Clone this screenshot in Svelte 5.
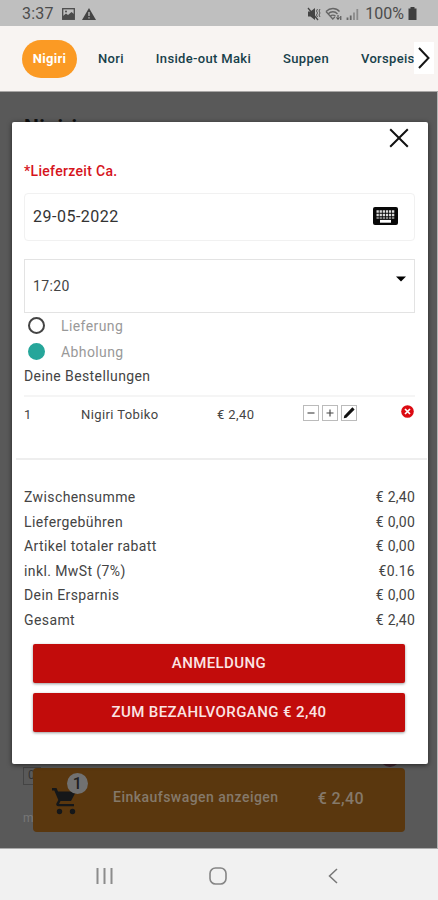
<script lang="ts">
	const categories = ['Nigiri', 'Nori', 'Inside-out Maki', 'Suppen', 'Vorspeisen'];

	const totals = [
		{ label: 'Zwischensumme', value: '€ 2,40' },
		{ label: 'Liefergebühren', value: '€ 0,00' },
		{ label: 'Artikel totaler rabatt', value: '€ 0,00' },
		{ label: 'inkl. MwSt (7%)', value: '€0.16' },
		{ label: 'Dein Ersparnis', value: '€ 0,00' },
		{ label: 'Gesamt', value: '€ 2,40' }
	];

	let active = $state('Nigiri');
	let mode = $state('Abholung');
</script>

<div class="phone">
	<header class="status">
		<span class="clock">3:37</span>
		<svg class="photo" width="13" height="12" viewBox="0 0 13 12">
			<rect x="0.7" y="0.7" width="11.6" height="10.6" fill="none" stroke="#4b4b4b" stroke-width="1.3" />
			<path d="M1 10V8l3-2.5L6 7l3.5-3L12 6v5H1z" fill="#4b4b4b" />
			<circle cx="4" cy="3.6" r="1" fill="#4b4b4b" />
		</svg>
		<svg width="14" height="12" viewBox="0 0 14 12">
			<path d="M7 0l7 12H0z" fill="#444" />
			<path d="M7 4v4M7 9.2v1.4" stroke="#bfbfbf" stroke-width="1.3" />
		</svg>
		<span class="spacer"></span>
		<svg class="mute" width="14" height="14" viewBox="0 0 14 14">
			<path d="M1 4.5h2.5L8 1v12L3.5 9.5H1z" fill="#444" />
			<path d="M1 1l10 12" stroke="#444" stroke-width="1.3" />
			<path d="M10.5 2l-1 2 1 2-1 2 1 2M13 2l-1 2 1 2-1 2 1 2" fill="none" stroke="#555" />
		</svg>
		<svg class="wifi" width="17" height="14" viewBox="0 0 17 14">
			<g fill="none" stroke="#666" stroke-width="1.3">
				<path d="M1 4.5c4-4 10-4 13.5 0M3 7c3-3 7-3 9.5 0M5.2 9.3c1.5-1.5 4-1.5 5.3 0" />
				<path d="M1 4.5L7.8 12l2-2" />
			</g>
			<path d="M13 8v4M11.5 10.5L13 12.5l1.5-2M15.8 13V9" stroke="#444" fill="none" />
		</svg>
		<svg class="signal" width="13" height="12" viewBox="0 0 13 12">
			<path d="M1.5 12v-2.5M4.7 12V7.5" stroke="#666" stroke-width="1.8" />
			<path d="M8 12V4.5M11.3 12V1" stroke="#8b8b8b" stroke-width="1.8" />
		</svg>
		<span class="percent">100%</span>
		<svg width="9" height="13" viewBox="0 0 9 13">
			<path d="M2.5 0h4v1.5h2v11.5h-8V1.5h2z" fill="#3e3e3e" />
		</svg>
	</header>

	<nav class="categories">
		{#each categories as category (category)}
			<button class="category" class:active={category === active} onclick={() => (active = category)}>
				{category}
			</button>
		{/each}
		<span class="next">
			<svg width="12" height="22" viewBox="0 0 12 22">
				<path d="M1 1l9.5 10L1 21" fill="none" stroke="#151515" stroke-width="2" />
			</svg>
		</span>
	</nav>

	<main class="page">
		<h2>Nigiri</h2>
		<div class="behind">
			<div class="stub">0</div>
			<div class="stub-text">m</div>
		</div>
		<div class="round"></div>

		<div class="cart">
			<span class="cart-icon">
				<svg width="26" height="28" viewBox="0 0 26 28">
					<path d="M1 1h4.5l1.5 3.5h18l-5 9.500H9.500L8 17h15v2.300H7.500c-2 0-2.800-1.500-2-3L7.300 13 3.300 3.400H1z" fill="#151719" />
					<circle cx="8.500" cy="24.500" r="2.700" fill="#151719" />
					<circle cx="21.500" cy="24.500" r="2.700" fill="#151719" />
				</svg>
				<span class="badge">1</span>
			</span>
			<span class="cart-label">Einkaufswagen anzeigen</span>
			<span class="cart-price">€ 2,40</span>
		</div>

		<section class="modal">
			<div class="close">
				<svg width="20" height="20" viewBox="0 0 20 20">
					<path d="M1.2 1.2l17.6 17.6M18.8 1.2L1.2 18.8" stroke="#111" stroke-width="2" />
				</svg>
			</div>
			<div class="required">*Lieferzeit Ca.</div>
			<div class="date">
				<span>29-05-2022</span>
				<svg width="25" height="18" viewBox="0 0 25 18">
					<rect width="25" height="18" rx="2" fill="#080808" />
					<path d="M3.5 4.5h18M3.5 8h18" stroke="#ddd" stroke-width="2.6" stroke-dasharray="2.3 0.8" />
					<path d="M3.5 11h18" stroke="#aaa" stroke-width="1.6" stroke-dasharray="2.3 0.8" />
					<path d="M7 14.3h11" stroke="#fff" stroke-width="2.8" />
				</svg>
			</div>
			<div class="time">
				<span>17:20</span>
				<svg width="10" height="6" viewBox="0 0 10 6">
					<path d="M0 0.5h10L5 5.5z" fill="#000" />
				</svg>
			</div>

			<div class="modes">
				{#each ['Lieferung', 'Abholung'] as option (option)}
					<button class="mode" onclick={() => (mode = option)}>
						<span class="radio" class:checked={mode === option}></span>
						{option}
					</button>
				{/each}
			</div>
			<div class="orders-title">Deine Bestellungen</div>

			<div class="order">
				<span class="qty">1</span>
				<span class="name">Nigiri Tobiko</span>
				<span class="price">€ 2,40</span>
				<span class="tools">
					<svg viewBox="0 0 16 16"><path d="M4 8h8" stroke="#444" stroke-width="1.3" /></svg>
					<svg viewBox="0 0 16 16"><path d="M4 8h8M8 4v8" stroke="#444" stroke-width="1.3" /></svg>
					<svg viewBox="0 0 16 16">
						<path d="M2 14l0.6-3L11 2.300l1-0.800 2.400 2.400-0.800 1L5 13.400z" fill="#111" />
					</svg>
				</span>
				<svg class="remove" width="13" height="13" viewBox="0 0 13 13">
					<circle cx="6.5" cy="6.5" r="6.3" fill="#dc0a12" />
					<path d="M4 4l5 5M9 4L4 9" stroke="#fff" stroke-width="1.7" />
				</svg>
			</div>

			<div class="totals">
				{#each totals as row (row.label)}
					<div class="total">
						<span>{row.label}</span>
						<span class="amount">{row.value}</span>
					</div>
				{/each}
			</div>

			<div class="actions">
				<button>ANMELDUNG</button>
				<button>ZUM BEZAHLVORGANG € 2,40</button>
			</div>
		</section>
	</main>

	<footer class="system">
		<svg width="17" height="16" viewBox="0 0 17 16">
			<path d="M1.5 0v16M8.5 0v16M15.5 0v16" stroke="#8c8c8c" stroke-width="2" />
		</svg>
		<svg class="home" width="18" height="18" viewBox="0 0 18 18">
			<rect x="1" y="1" width="16" height="16" rx="5.5" fill="none" stroke="#858585" stroke-width="1.6" />
		</svg>
		<svg width="10" height="16" viewBox="0 0 10 16">
			<path d="M9 1L1.5 8 9 15" fill="none" stroke="#777" stroke-width="1.5" />
		</svg>
	</footer>
</div>

<style>
	:global(body) {
		margin: 0;
	}
	.phone {
		width: 438px;
		height: 900px;
		display: flex;
		flex-direction: column;
		overflow: hidden;
		font-family: Roboto, 'Liberation Sans', sans-serif;
		font-size: 14px;
		letter-spacing: 0.4px;
		color: #444;
		background: #f1f1f1;
	}
	.phone *,
	.phone {
		box-sizing: border-box;
	}
	button {
		border: 0;
		padding: 0;
		background: none;
		font: inherit;
		letter-spacing: inherit;
		color: inherit;
	}
	svg {
		display: block;
		flex: none;
	}

	.status {
		height: 26px;
		flex: none;
		display: flex;
		align-items: center;
		padding: 1px 21px 0 22px;
		background: #bfbfbf;
		color: #4c4c4c;
		font-size: 16px;
		letter-spacing: 0;
	}
	.clock {
		width: 40px;
		letter-spacing: 0.2px;
	}
	.photo {
		margin-right: 7px;
	}
	.spacer {
		flex: 1;
	}
	.mute {
		margin-right: 4px;
	}
	.wifi {
		margin-right: 4px;
	}
	.signal {
		margin-right: 6px;
	}
	.percent {
		margin-right: 4px;
	}

	.categories {
		height: 66px;
		flex: none;
		display: flex;
		align-items: center;
		position: relative;
		overflow: hidden;
		padding-left: 22px;
		background: #f8f4f2;
		border-bottom: 1px solid #a8a6a5;
	}
	.category {
		flex: none;
		height: 38px;
		margin-right: 32px;
		font-size: 13px;
		font-weight: 500;
		letter-spacing: 0.33px;
		color: #17404a;
	}
	.category.active {
		width: 55px;
		margin-right: 21px;
		border-radius: 19px;
		background: #fb9a24;
		color: #fff;
		font-weight: 700;
	}
	.next {
		position: absolute;
		right: 4px;
		top: 16px;
		width: 20px;
		height: 32px;
		display: flex;
		align-items: center;
		justify-content: center;
		background: #fff;
	}

	.page {
		position: relative;
		flex: 1;
		display: flex;
		flex-direction: column;
		justify-content: space-between;
		padding: 25px 32px 16px 24px;
		background: #595959;
		border-right: 1px solid #b5b5b5;
	}
	h2 {
		margin: 0;
		font-size: 21px;
		line-height: 21px;
		color: #111;
	}
	.behind {
		position: absolute;
		left: 23px;
		top: 675px;
		font-size: 12px;
		color: #333;
	}
	.stub {
		width: 18px;
		height: 18px;
		padding-left: 4px;
		line-height: 15px;
		border: 1px solid #444;
	}
	.stub-text {
		margin-top: 25px;
		line-height: 16px;
		color: #777;
	}
	.round {
		position: absolute;
		left: 380px;
		top: 655px;
		width: 20px;
		height: 20px;
		border-radius: 50%;
		background: #3f2730;
	}
	.cart {
		position: relative;
		height: 64px;
		margin-left: 9px;
		display: flex;
		align-items: center;
		padding: 0 41px 6px 18px;
		border-radius: 4px;
		background: #5a370e;
		color: #85796a;
		font-weight: 500;
	}
	.cart-icon {
		position: relative;
		margin-top: 8px;
	}
	.badge {
		position: absolute;
		left: 16px;
		top: -14px;
		width: 21px;
		height: 21px;
		border-radius: 50%;
		background: #717171;
		color: #202020;
		font-size: 16px;
		line-height: 21px;
		text-align: center;
	}
	.cart-label {
		margin-left: 36px;
		flex: 1;
		letter-spacing: 0.47px;
	}
	.cart-price {
		font-size: 16px;
		padding-top: 2px;
	}

	.modal {
		position: absolute;
		left: 12px;
		top: 30px;
		width: 416px;
		height: 642px;
		padding: 6px 13px 0 12px;
		border-radius: 2px;
		background: #fff;
		box-shadow: 0 1px 5px rgba(0, 0, 0, 0.6);
	}
	.close {
		display: flex;
		justify-content: flex-end;
		padding-right: 6px;
	}
	.required {
		margin-top: 14px;
		line-height: 18px;
		font-weight: 500;
		letter-spacing: 0.32px;
		color: #d6141c;
	}
	.date {
		margin-top: 13px;
		height: 48px;
		display: flex;
		align-items: center;
		justify-content: space-between;
		padding: 0 16px 2px 8px;
		border: 1px solid #f1f1f1;
		border-radius: 4px;
		font-size: 16px;
		letter-spacing: 0.5px;
		color: #333;
	}
	.time {
		margin-top: 18px;
		height: 54px;
		display: flex;
		align-items: center;
		justify-content: space-between;
		padding: 0 8px 1px 8px;
		border: 1px solid #e3e3e3;
	}
	.time svg {
		margin-top: -14px;
	}
	.modes {
		display: flex;
		flex-direction: column;
	}
	.mode {
		height: 26px;
		display: flex;
		align-items: center;
		gap: 16px;
		padding: 0 0 1px 4px;
		color: #999;
	}
	.radio {
		width: 17px;
		height: 17px;
		border: 2px solid #444;
		border-radius: 50%;
	}
	.radio.checked {
		border-color: #26a69a;
		background: #26a69a;
	}
	.orders-title {
		line-height: 22px;
		padding-bottom: 8px;
		border-bottom: 2px solid #f5f5f5;
	}
	.order {
		display: flex;
		align-items: flex-start;
		height: 63px;
		margin: 0 -12px 0 -8px;
		padding: 8px 12px 0 8px;
		line-height: 20px;
		border-bottom: 2px solid #eee;
		font-size: 13px;
	}
	.qty {
		width: 57px;
	}
	.name {
		width: 136px;
	}
	.price {
		width: 86px;
	}
	.tools {
		display: flex;
		gap: 3px;
	}
	.tools svg {
		width: 16px;
		height: 16px;
		border: 1px solid #bbb;
	}
	.remove {
		margin-left: auto;
		margin-right: 1px;
	}
	.totals {
		padding-top: 25px;
	}
	.total {
		display: flex;
		justify-content: space-between;
		height: 24.5px;
		line-height: 24px;
	}
	.amount {
		letter-spacing: 0.25px;
	}
	.actions {
		display: flex;
		flex-direction: column;
		gap: 10px;
		padding: 12px 10px 0 9px;
	}
	.actions button {
		height: 39px;
		padding-bottom: 1px;
		border-radius: 2px;
		background: #c20c0b;
		box-shadow: 0 1px 3px rgba(0, 0, 0, 0.4);
		color: #fbe4e4;
		font-size: 15px;
		font-weight: 500;
	}

	.system {
		height: 52px;
		flex: none;
		display: flex;
		align-items: center;
		justify-content: space-between;
		padding: 2px 100px 0 96px;
		border-top: 1px solid #aaa;
		background: #f1f1f1;
	}
	.home {
		margin-right: 5px;
	}
</style>
